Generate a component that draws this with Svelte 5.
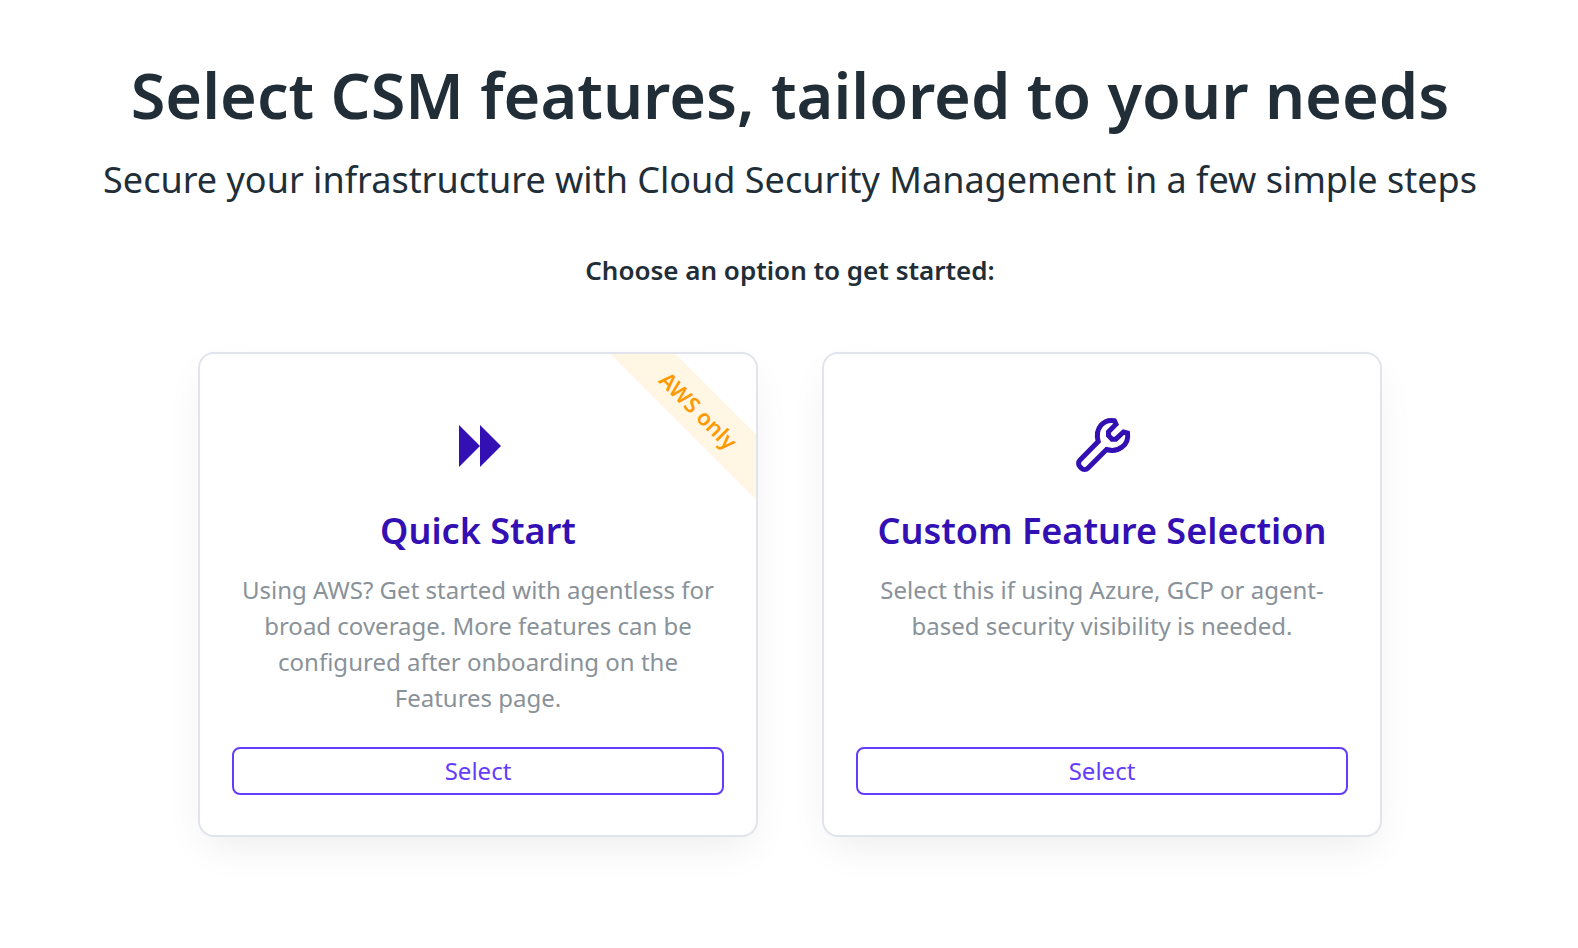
<script>
  const options = [
    {
      id: 'quick',
      title: 'Quick Start',
      text: 'Using AWS? Get started with agentless for broad coverage. More features can be configured after onboarding on the Features page.',
      ribbon: 'AWS only'
    },
    {
      id: 'custom',
      title: 'Custom Feature Selection',
      text: 'Select this if using Azure, GCP or agent-based security visibility is needed.'
    }
  ];
</script>

<main>
  <h1>Select CSM features, tailored to your needs</h1>
  <p class="subtitle">Secure your infrastructure with Cloud Security Management in a few simple steps</p>
  <p class="prompt">Choose an option to get started:</p>

  <div class="options">
    {#each options as option (option.id)}
      <section class="card" aria-labelledby={option.id}>
        {#if option.ribbon}
          <span class="ribbon">{option.ribbon}</span>
        {/if}
        {#if option.id === 'quick'}
          <svg class="icon" viewBox="0 0 64 64" aria-hidden="true">
            <path d="M13 11L34 32L13 53ZM34 11L55 32L34 53Z" fill="currentColor" />
          </svg>
        {:else}
          <svg class="icon" viewBox="-1 0 64 64" aria-hidden="true">
            <path
              d="M43.500 6.800C33 4.500 23.500 14 27.200 27.500L8.800 46.200C7.200 47.800 7.200 51 8.800 52.600L10.400 54.200C12 55.800 15.200 55.800 16.800 54.200L35.500 35.500C47 39 58.500 31 56.500 19L52.500 18L44.800 25.200H41L37.500 21.500V17.800L45 10.200Z"
              fill="none" stroke="currentColor" stroke-width="5" stroke-linejoin="miter" />
          </svg>
        {/if}
        <h2 id={option.id}>{option.title}</h2>
        <p class="description">{option.text}</p>
        <button type="button" aria-describedby={option.id}>Select</button>
      </section>
    {/each}
  </div>
</main>

<style>
  :global(body) {
    margin: 0;
    background: #fff;
  }

  main {
    padding: 48px 32px 110px 34px;
    display: flex;
    flex-direction: column;
    align-items: center;
    font-family: "Noto Sans", sans-serif;
    color: #212e37;
    text-align: center;
  }

  h1, h2, p {
    margin: 0;
  }

  h1 {
    font-size: 63px;
    line-height: 94px;
    font-weight: 600;
  }

  .subtitle {
    margin-top: 10px;
    font-size: 36px;
    line-height: 56px;
  }

  .prompt {
    margin-top: 42px;
    font-size: 26px;
    line-height: 40px;
    font-weight: 600;
  }

  .options {
    width: 100%;
    max-width: 1184px;
    margin-top: 62px;
    display: grid;
    grid-template-columns: 1fr 1fr;
    gap: 64px;
  }

  .card {
    position: relative;
    overflow: hidden;
    box-sizing: border-box;
    padding: 60px 32px 40px;
    display: flex;
    flex-direction: column;
    align-items: center;
    border: 2px solid #e1e4ed;
    border-radius: 16px;
    background: #fff;
    box-shadow: 0 16px 40px -8px rgba(0, 0, 0, 0.08);
  }

  .ribbon {
    position: absolute;
    top: 33px;
    right: -63px;
    width: 240px;
    transform: rotate(45deg);
    background: #fff6e3;
    color: #ff9900;
    font-size: 22px;
    line-height: 46px;
    font-weight: 600;
  }

  .icon {
    width: 64px;
    height: 64px;
    color: #3210b3;
  }

  h2 {
    margin-top: 28px;
    font-size: 36px;
    line-height: 50px;
    font-weight: 600;
    color: #3210b3;
  }

  .description {
    margin: 16px 0 31px;
    font-size: 24px;
    line-height: 36px;
    color: #8a9299;
  }

  button {
    width: 100%;
    height: 48px;
    margin-top: auto;
    padding: 0 0 2px;
    border: 2px solid #633dfa;
    border-radius: 8px;
    background: #fff;
    color: #633dfa;
    font: 24px "Noto Sans", sans-serif;
    cursor: pointer;
  }
</style>
